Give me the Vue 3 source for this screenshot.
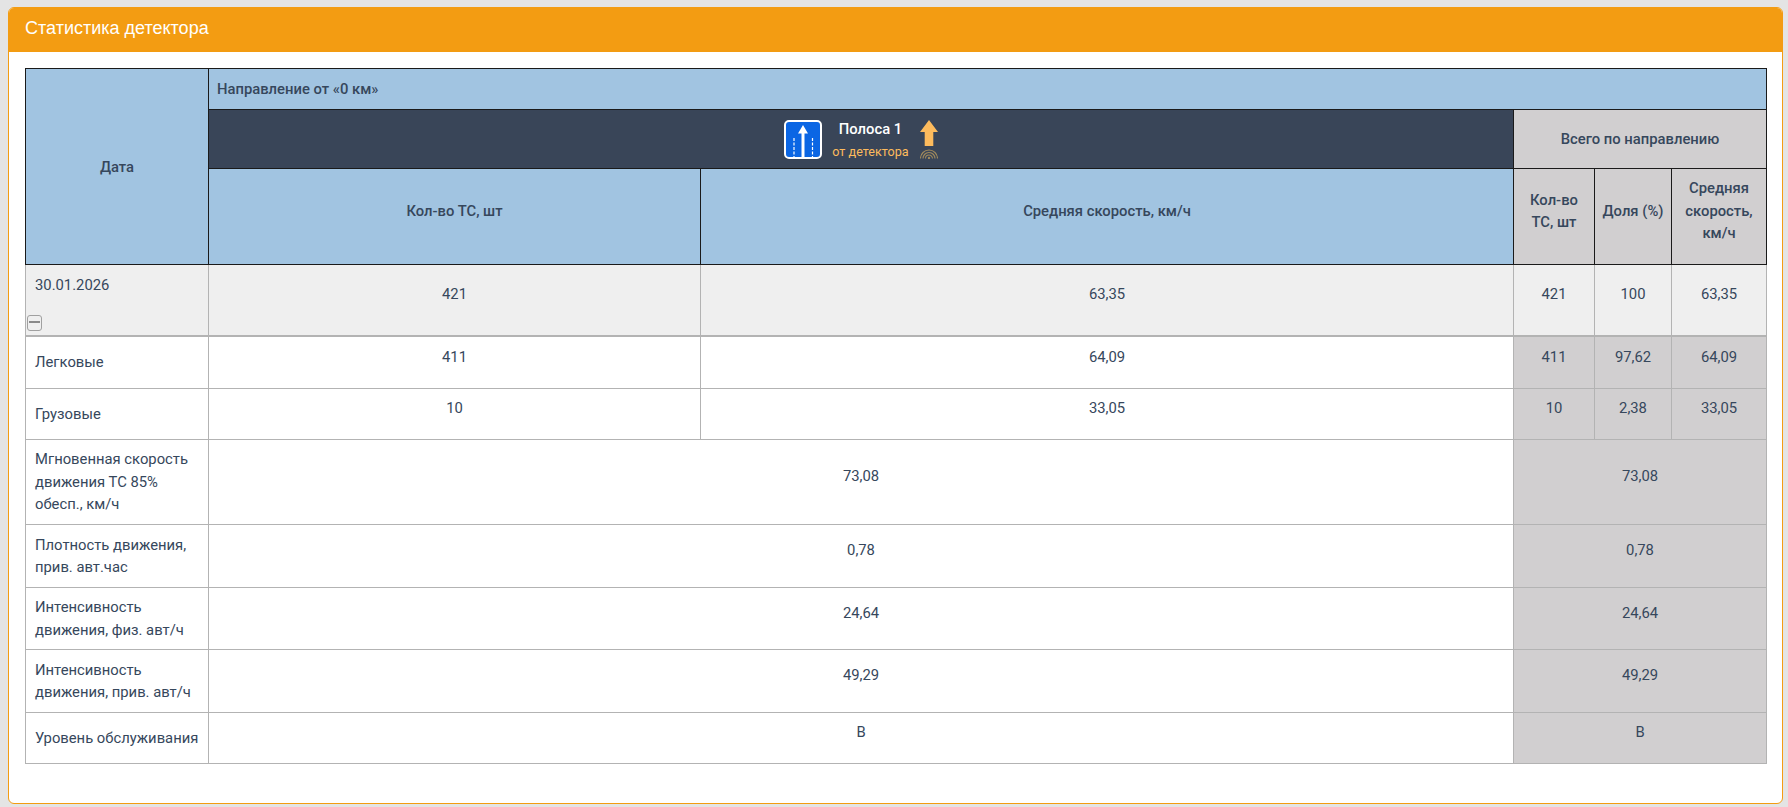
<template>
  <div class="page">
    <div class="card">
      <div class="card-header">Статистика детектора</div>
      <div class="card-body">
        <table class="stats">
          <colgroup>
            <col class="col-name" />
            <col class="col-count" />
            <col class="col-speed" />
            <col class="col-total-count" />
            <col class="col-total-share" />
            <col class="col-total-speed" />
          </colgroup>
          <thead>
            <tr class="row-direction">
              <th rowspan="3" class="blue date-head">Дата</th>
              <th colspan="5" class="blue direction">Направление от «0 км»</th>
            </tr>
            <tr class="row-lane">
              <th colspan="2" class="lane">
                <div class="lane-inner">
                  <svg class="lane-sign" width="38" height="39" viewBox="0 0 38 39">
                    <rect x="1" y="1" width="36" height="37" rx="4" fill="#0b66e4" stroke="#fff" stroke-width="2" />
                    <path d="M19 5 L24 13.500 H20.500 V37 H17.500 V13.500 H14 Z" fill="#fff" />
                    <path d="M10 18 V37 M28.500 18 V37" stroke="#fff" stroke-width="1.200" stroke-dasharray="3 1.500" />
                  </svg>
                  <div class="lane-text">
                    <div class="lane-title">Полоса 1</div>
                    <div class="lane-sub">от детектора</div>
                  </div>
                  <svg class="lane-arrow" width="18" height="39" viewBox="0 0 18 39">
                    <path d="M9 0 L18 12 H13.300 V26 H4.700 V12 H0 Z" fill="#fdbb5d" />
                    <g fill="none" stroke="#a08a5c" stroke-width="1.100">
                      <path d="M0.500 38.500 A8.500 8.500 0 0 1 17.500 38.500" />
                      <path d="M3 38.500 A6 6 0 0 1 15 38.500" />
                      <path d="M5.500 38.500 A3.500 3.500 0 0 1 12.500 38.500" />
                    </g>
                    <circle cx="9" cy="38" r="1.200" fill="#a08a5c" />
                  </svg>
                </div>
              </th>
              <th colspan="3" class="grey">Всего по направлению</th>
            </tr>
            <tr class="row-cols">
              <th class="blue">Кол-во ТС, шт</th>
              <th class="blue">Средняя скорость, км/ч</th>
              <th class="grey">Кол-во ТС, шт</th>
              <th class="grey">Доля (%)</th>
              <th class="grey">Средняя скорость, км/ч</th>
            </tr>
          </thead>
          <tbody>
            <tr class="row-date">
              <td class="name date-cell">
                30.01.2026
                <span class="toggle"></span>
              </td>
              <td>421</td>
              <td>63,35</td>
              <td>421</td>
              <td>100</td>
              <td>63,35</td>
            </tr>
            <tr v-for="row in typeRows" :key="row.name" :class="row.cls">
              <td class="name">{{ row.name }}</td>
              <td>{{ row.count }}</td>
              <td>{{ row.speed }}</td>
              <td class="total">{{ row.count }}</td>
              <td class="total">{{ row.share }}</td>
              <td class="total">{{ row.speed }}</td>
            </tr>
            <tr v-for="row in metricRows" :key="row.name" :class="row.cls">
              <td class="name">{{ row.name }}</td>
              <td colspan="2">{{ row.value }}</td>
              <td colspan="3" class="total">{{ row.value }}</td>
            </tr>
          </tbody>
        </table>
      </div>
    </div>
  </div>
</template>

<script setup>
const typeRows = [
  { name: 'Легковые', count: '411', speed: '64,09', share: '97,62', cls: 'row-h53' },
  { name: 'Грузовые', count: '10', speed: '33,05', share: '2,38', cls: 'row-h51' }
]

const metricRows = [
  { name: 'Мгновенная скорость движения ТС 85% обесп., км/ч', value: '73,08', cls: 'row-h85' },
  { name: 'Плотность движения, прив. авт.час', value: '0,78', cls: 'row-h63' },
  { name: 'Интенсивность движения, физ. авт/ч', value: '24,64', cls: 'row-h62' },
  { name: 'Интенсивность движения, прив. авт/ч', value: '49,29', cls: 'row-h63' },
  { name: 'Уровень обслуживания', value: 'В', cls: 'row-h51' }
]
</script>

<style>
html,
body {
  margin: 0;
  background: #e4e4e4;
}
</style>

<style scoped>
.page {
  height: 807px;
  padding: 7px 5px 3px 8px;
  box-sizing: border-box;
}

.card {
  height: 797px;
  box-sizing: border-box;
  background: #fff;
  border: 1px solid #f39c12;
  border-radius: 6px;
  overflow: hidden;
}

.card-header {
  height: 44px;
  padding-left: 16px;
  background: #f39c12;
  color: #fff;
  font: 18px/40px "Liberation Sans", Arial, sans-serif;
}

.card-body {
  padding: 16px 0 0 16px;
}

.stats {
  width: 1741px;
  table-layout: fixed;
  border-collapse: collapse;
  font-family: Roboto, "Noto Sans", sans-serif;
  font-size: 14.8px;
  line-height: 22.5px;
  color: #36475c;
}

.col-name { width: 183px; }
.col-count { width: 492px; }
.col-speed { width: 813px; }
.col-total-count { width: 81px; }
.col-total-share { width: 77px; }
.col-total-speed { width: 95px; }

th {
  border: 1px solid #1a1a1a;
  font-weight: 500;
  padding: 0 8px;
  text-align: center;
}

td {
  border: 1px solid #b3b3b3;
  padding: 0 8px 11px;
  text-align: center;
  vertical-align: middle;
}

.blue { background: #a1c4e1; }
.grey { background: #d1cfd0; }

.direction { text-align: left; }
.date-head { padding-top: 2px; }
.lane { background: #394558; }

.row-direction { height: 41px; }
.row-lane { height: 59px; }
.row-cols { height: 96px; }
.row-cols th { padding: 0 4px 11px; }
.row-date { height: 71px; background: #efefef; }
.row-date td { border-bottom-width: 2px; }
.row-h85 { height: 85px; }
.row-h63 { height: 63px; }
.row-h62 { height: 62px; }
.row-h53 { height: 53px; }
.row-h51 { height: 51px; }

.lane-inner {
  display: flex;
  justify-content: center;
  align-items: center;
}

.lane-sign { flex: none; }

.lane-text {
  margin: 3px 11px 0 10px;
  text-align: center;
}

.lane-title {
  color: #fff;
  font-weight: 500;
}

.lane-sub {
  margin-top: 1px;
  color: #fdbb5d;
  font-size: 12.6px;
  font-weight: 400;
}

.lane-arrow { flex: none; }

.name {
  text-align: left;
  padding: 0 8px 0 9px;
}

.date-cell {
  position: relative;
  vertical-align: top;
  padding-top: 9px;
}

.toggle {
  position: absolute;
  left: 1px;
  bottom: 4px;
  width: 15px;
  height: 16px;
  box-sizing: border-box;
  border: 1.5px solid #a0a0a0;
  border-radius: 3px;
}

.toggle::after {
  content: "";
  position: absolute;
  left: 1px;
  right: 1px;
  top: 5px;
  height: 2px;
  background: #8a8a8a;
}

.total { background: #d1cfd0; }
</style>
